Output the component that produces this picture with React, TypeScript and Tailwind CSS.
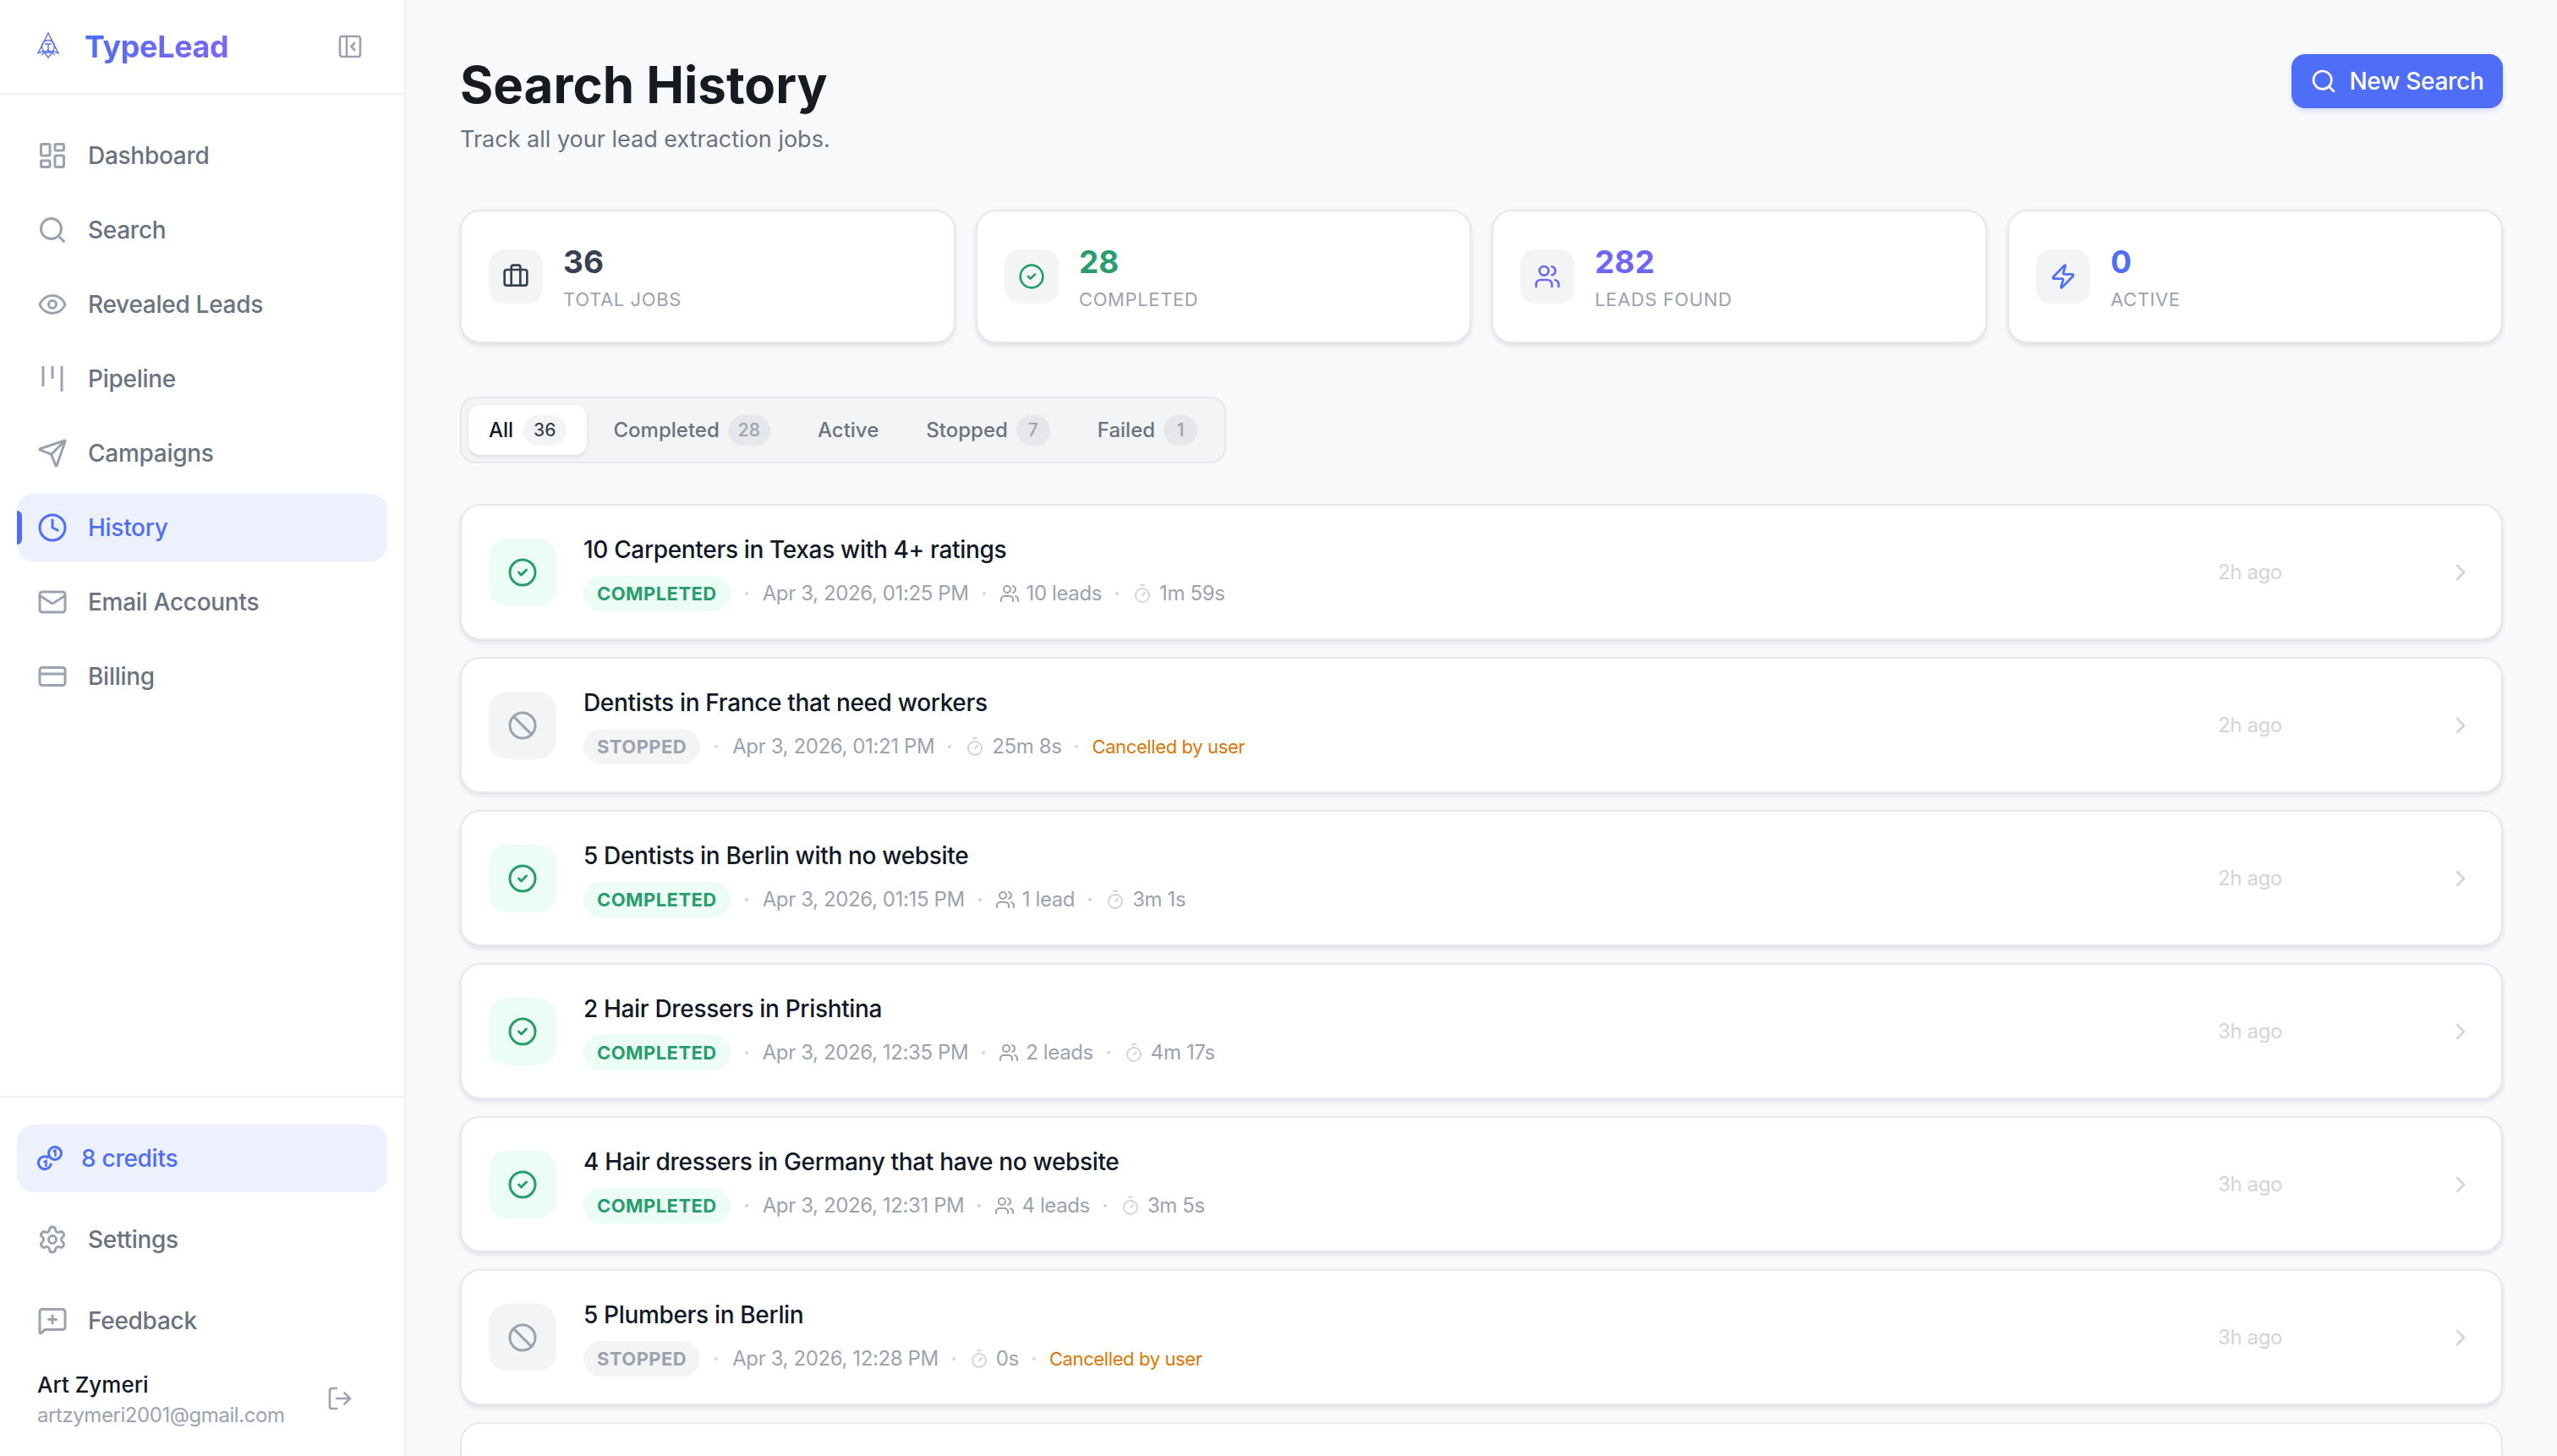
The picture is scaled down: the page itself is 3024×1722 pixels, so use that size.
import React from "react";
import {
  LayoutDashboard, Search, Eye, Send, Clock, Mail, CreditCard, Settings, MessageSquarePlus, LogOut,
  PanelLeftClose, Briefcase, CircleCheck, Users, Zap, Ban, Timer, ChevronRight,
} from "lucide-react";

function Logo() {
  return (
    <svg width="28" height="34" viewBox="0 0 28 34" fill="none" stroke="#5b6ef7" strokeWidth="1.4" className="shrink-0">
      <path d="M14 1 L26 25 L20 22.5 L14 30 L8 22.5 L2 25 Z" />
      <circle cx="14" cy="17" r="7.5" />
      <path d="M10 14 H18 M14 14 V25 M6 27 L14 21 L22 27" />
      <path d="M14 30 V33" stroke="#c7cdfb" />
    </svg>
  );
}

function PipelineIcon() {
  return (
    <svg width="36" height="36" viewBox="0 0 36 36" fill="none" stroke="#9ca3af" strokeWidth="3" className="shrink-0">
      <path d="M7 3 V27" />
      <path d="M18 3 V18" />
      <path d="M29 3 V33" />
    </svg>
  );
}

function CoinsIcon() {
  return (
    <svg width="30" height="30" viewBox="0 0 30 30" fill="none" stroke="#4f6ef7" strokeWidth="3" strokeLinecap="round" className="shrink-0">
      <circle cx="21" cy="9" r="7.5" />
      <path d="M19.5 6.5 L21.5 5.5 V12" strokeWidth="2.4" />
      <path d="M12.5 13.6 A7.5 7.5 0 1 0 16.2 22" />
      <path d="M8.5 19 L10.5 18 V24" strokeWidth="2.4" />
    </svg>
  );
}

const navItems = [
  { label: "Dashboard", icon: <LayoutDashboard size={36} color="#9ca3af" /> },
  { label: "Search", icon: <Search size={36} color="#9ca3af" /> },
  { label: "Revealed Leads", icon: <Eye size={36} color="#9ca3af" /> },
  { label: "Pipeline", icon: <PipelineIcon /> },
  { label: "Campaigns", icon: <Send size={36} color="#9ca3af" /> },
  { label: "History", icon: <Clock size={36} color="#4f6ef7" />, active: true },
  { label: "Email Accounts", icon: <Mail size={36} color="#9ca3af" /> },
  { label: "Billing", icon: <CreditCard size={36} color="#9ca3af" /> },
];

function NavItem({ label, icon, active }: { label: string; icon: React.ReactNode; active?: boolean }) {
  return (
    <div
      className={
        active
          ? "relative flex h-[80px] items-center gap-[24px] overflow-hidden rounded-[20px] bg-[#edf1fd] pl-[24px] text-[28px] font-medium tracking-[-0.01em] text-[#4f6ef7]"
          : "relative flex h-[80px] items-center gap-[24px] rounded-[20px] pl-[24px] text-[28px] font-medium tracking-[-0.01em] text-[#6b7280]"
      }
    >
      {active ? <span className="absolute left-0 top-[20px] h-[40px] w-[6px] rounded-r-[6px] bg-[#4f6ef7]" /> : null}
      {icon}
      <span>{label}</span>
    </div>
  );
}

function Sidebar() {
  return (
    <aside className="flex h-full w-[480px] shrink-0 flex-col border-r-2 border-[#eef0f4] bg-white">
      <div className="flex h-[112px] shrink-0 items-center justify-between border-b-2 border-[#eef0f4] pl-[43px] pr-[48px]">
        <div className="flex items-center gap-[29px]">
          <Logo />
          <span className="bg-gradient-to-r from-[#4f6ef7] to-[#7c66f5] bg-clip-text text-[36px] font-bold leading-[48px] tracking-[-0.01em] text-transparent">
            TypeLead
          </span>
        </div>
        <PanelLeftClose size={32} color="#9ca3af" />
      </div>
      <nav className="flex flex-col gap-[8px] px-[20px] pt-[32px]">
        {navItems.map((n) => (
          <NavItem key={n.label} label={n.label} icon={n.icon} active={n.active} />
        ))}
      </nav>
      <div className="mt-auto border-t-2 border-[#eef0f4] px-[20px] pt-[32px]">
        <div className="flex h-[80px] items-center gap-[22px] rounded-[20px] bg-[#edf1fd] pl-[24px] text-[28px] font-medium tracking-[-0.01em] text-[#4f6ef7]">
          <CoinsIcon />
          <span>8 credits</span>
        </div>
        <div className="mt-[16px] flex flex-col gap-[16px]">
          <NavItem label="Settings" icon={<Settings size={36} color="#9ca3af" />} />
          <NavItem label="Feedback" icon={<MessageSquarePlus size={36} color="#9ca3af" />} />
        </div>
        <div className="mt-[16px] flex items-center justify-between pb-[32px] pl-[24px] pr-[40px]">
          <div>
            <div className="text-[26px] font-medium leading-[40px] text-[#111827]">Art Zymeri</div>
            <div className="text-[24px] leading-[32px] tracking-[-0.018em] text-[#9ca3af]">artzymeri2001@gmail.com</div>
          </div>
          <LogOut size={32} color="#9ca3af" />
        </div>
      </div>
    </aside>
  );
}

const stats = [
  { value: "36", label: "TOTAL JOBS", color: "text-[#374151]", icon: <Briefcase size={32} color="#374151" /> },
  { value: "28", label: "COMPLETED", color: "text-[#2a9d6e]", icon: <CircleCheck size={32} color="#2a9d6e" /> },
  { value: "282", label: "LEADS FOUND", color: "text-[#6f66f6]", icon: <Users size={32} color="#6f66f6" /> },
  { value: "0", label: "ACTIVE", color: "text-[#4f6ef7]", icon: <Zap size={32} color="#4f6ef7" /> },
];

function StatCard({ value, label, color, icon }: { value: string; label: string; color: string; icon: React.ReactNode }) {
  return (
    <div className="flex flex-1 items-center gap-[24px] rounded-[24px] border-2 border-[#e7e8ee] bg-white px-[32px] py-[36px] shadow-[0_3px_5px_rgba(50,55,90,0.12)]">
      <div className="flex h-[64px] w-[64px] items-center justify-center rounded-[18px] bg-[#f3f4f6]">{icon}</div>
      <div>
        <div className={`text-[37px] font-bold leading-[48px] ${color}`}>{value}</div>
        <div className="mt-[6px] text-[22px] leading-[28px] tracking-[0.028em] text-[#9ca3af]">{label}</div>
      </div>
    </div>
  );
}

const tabs = [
  { label: "All", count: "36", active: true },
  { label: "Completed", count: "28" },
  { label: "Active" },
  { label: "Stopped", count: "7" },
  { label: "Failed", count: "1" },
];

function Tabs() {
  return (
    <div className="mt-[63px] flex w-fit gap-[8px] rounded-[18px] border-2 border-[#e7e8ee] bg-[#f3f4f6] p-[8px]">
      {tabs.map((t) => (
        <div
          key={t.label}
          className={
            t.active
              ? "flex h-[59px] items-center gap-[12px] rounded-[14px] bg-white px-[24px] text-[24px] font-medium text-[#111827] shadow-[0_2px_4px_rgba(50,55,90,0.12)]"
              : "flex h-[59px] items-center gap-[10px] rounded-[14px] px-[24px] text-[24px] font-medium text-[#6b7280]"
          }
        >
          <span>{t.label}</span>
          {t.count ? (
            <span
              className={
                t.active
                  ? "flex h-[36px] min-w-[40px] items-center justify-center rounded-full bg-[#f3f4f6] px-[12px] text-[21px] text-[#374151]"
                  : "flex h-[36px] min-w-[40px] items-center justify-center rounded-full bg-[#e5e7eb] px-[12px] text-[21px] text-[#9ca3af]"
              }
            >
              {t.count}
            </span>
          ) : null}
        </div>
      ))}
    </div>
  );
}

type Job = { title: string; status: "COMPLETED" | "STOPPED"; date: string; leads?: string; time: string; ago: string };

const jobs: Job[] = [
  { title: "10 Carpenters in Texas with 4+ ratings", status: "COMPLETED", date: "Apr 3, 2026, 01:25 PM", leads: "10 leads", time: "1m 59s", ago: "2h ago" },
  { title: "Dentists in France that need workers", status: "STOPPED", date: "Apr 3, 2026, 01:21 PM", time: "25m 8s", ago: "2h ago" },
  { title: "5 Dentists in Berlin with no website", status: "COMPLETED", date: "Apr 3, 2026, 01:15 PM", leads: "1 lead", time: "3m 1s", ago: "2h ago" },
  { title: "2 Hair Dressers in Prishtina", status: "COMPLETED", date: "Apr 3, 2026, 12:35 PM", leads: "2 leads", time: "4m 17s", ago: "3h ago" },
  { title: "4 Hair dressers in Germany that have no website", status: "COMPLETED", date: "Apr 3, 2026, 12:31 PM", leads: "4 leads", time: "3m 5s", ago: "3h ago" },
  { title: "5 Plumbers in Berlin", status: "STOPPED", date: "Apr 3, 2026, 12:28 PM", time: "0s", ago: "3h ago" },
];

function Dot() {
  return <span className="h-[4px] w-[4px] shrink-0 rounded-full bg-[#d1d5db]" />;
}

function JobRow({ job }: { job: Job }) {
  const done = job.status === "COMPLETED";
  return (
    <div className="flex items-center rounded-[24px] border-2 border-[#e7e8ee] bg-white px-[32px] py-[32px] shadow-[0_3px_5px_rgba(50,55,90,0.12)]">
      <div
        className={
          done
            ? "flex h-[80px] w-[80px] shrink-0 items-center justify-center rounded-[22px] bg-[#ecfdf5]"
            : "flex h-[80px] w-[80px] shrink-0 items-center justify-center rounded-[22px] bg-[#f3f4f6]"
        }
      >
        {done ? <CircleCheck size={36} color="#2a9d6e" /> : <Ban size={36} color="#9ca3af" />}
      </div>
      <div className="ml-[32px] min-w-0 flex-1">
        <div className="text-[28px] font-medium leading-[40px] tracking-[-0.012em] text-[#111827]">{job.title}</div>
        <div className="mt-[11px] flex h-[42px] items-center gap-[16px] text-[24px] tracking-[-0.016em] text-[#9ca3af]">
          <span
            className={
              done
                ? "mr-[1px] flex h-[42px] items-center rounded-full bg-[#ecfdf5] px-[16px] text-[22px] font-bold tracking-[0.02em] text-[#2a9d6e]"
                : "mr-[1px] flex h-[42px] items-center rounded-full bg-[#f3f4f6] px-[16px] text-[22px] font-bold tracking-[0.02em] text-[#9ca3af]"
            }
          >
            {job.status}
          </span>
          <Dot />
          <span className="ml-[1px]">{job.date}</span>
          <Dot />
          {job.leads ? (
            <>
              <span className="flex items-center gap-[8px]">
                <Users size={24} color="#9ca3af" />
                {job.leads}
              </span>
              <Dot />
            </>
          ) : null}
          <span className="flex items-center gap-[8px]">
            <Timer size={24} color="#d1d5db" />
            {job.time}
          </span>
          {done ? null : (
            <>
              <Dot />
              <span className="text-[22px] text-[#d97706]">Cancelled by user</span>
            </>
          )}
        </div>
      </div>
      <div className="w-[271px] shrink-0 text-[24px] tracking-[-0.016em] text-[#d1d5db]">{job.ago}</div>
      <ChevronRight size={32} color="#d1d5db" className="shrink-0" />
    </div>
  );
}

export default function App() {
  return (
    <div className="flex h-screen w-full overflow-hidden bg-[#f8f9fb] font-[Inter,sans-serif]">
      <Sidebar />
      <main className="min-w-0 flex-1 overflow-hidden px-[64px] pt-[64px]">
        <div className="flex items-start justify-between">
          <div>
            <h1 className="text-[60px] font-bold leading-[72px] text-[#171a21]">Search History</h1>
            <p className="mt-[9px] text-[27px] leading-[40px] text-[#6b7280]">Track all your lead extraction jobs.</p>
          </div>
          <button className="flex h-[64px] w-[250px] items-center justify-center gap-[14px] rounded-[16px] bg-[#4f6ef7] text-[28px] font-medium tracking-[-0.01em] text-white shadow-[0_3px_6px_rgba(79,110,247,0.2)]">
            <Search size={32} color="#ffffff" />
            New Search
          </button>
        </div>
        <div className="mt-[63px] flex gap-[24px]">
          {stats.map((s) => (
            <StatCard key={s.label} {...s} />
          ))}
        </div>
        <Tabs />
        <div className="mt-[48px] flex flex-col gap-[20px]">
          {jobs.map((j) => (
            <JobRow key={j.title} job={j} />
          ))}
          <div className="h-[160px] shrink-0 rounded-[24px] border-2 border-[#e7e8ee] bg-white" />
        </div>
      </main>
    </div>
  );
}
